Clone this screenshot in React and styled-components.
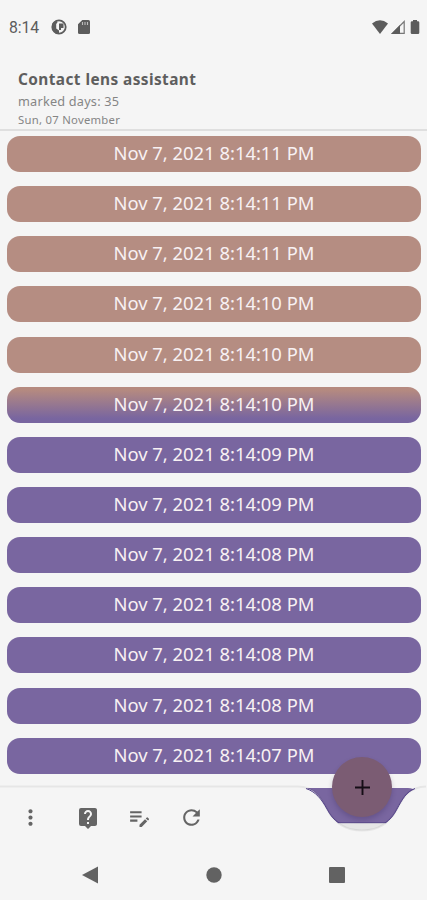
import React from 'react';
import styled, { createGlobalStyle } from 'styled-components';
import { MdMoreVert, MdLiveHelp, MdEditNote, MdRefresh } from 'react-icons/md';

const GlobalStyle = createGlobalStyle`
  * {
    box-sizing: border-box;
  }

  body {
    margin: 0;
    background: #f5f5f5;
    font-family: 'Noto Sans', 'Open Sans', sans-serif;
  }
`;

const Screen = styled.div`
  display: flex;
  flex-direction: column;
  width: 427px;
  height: 900px;
  overflow: hidden;
  background: #f5f5f5;
`;

const StatusBar = styled.div`
  display: flex;
  align-items: center;
  height: 54px;
  padding: 0 5px 0 9px;
  color: #5c5c5c;
  font-family: Roboto, sans-serif;
  font-size: 15.8px;
  letter-spacing: -0.1px;

  svg {
    display: block;
  }
`;

const StatusGroup = styled.div`
  display: flex;
  align-items: center;
  gap: ${({ $gap }) => $gap}px;
  margin-left: ${({ $push }) => ($push ? 'auto' : '12px')};
`;

const Header = styled.header`
  height: 77px;
  padding: 15px 18px 0;
  border-bottom: 2px solid #dfdfdf;
`;

const Title = styled.h1`
  margin: 0;
  color: #5e5e5e;
  font-size: 15.4px;
  font-weight: 700;
  line-height: 21px;
  letter-spacing: 0.42px;
`;

const Subtitle = styled.div`
  color: #858585;
  font-size: ${({ $size }) => $size}px;
  line-height: ${({ $line }) => $line}px;
  letter-spacing: ${({ $spacing }) => $spacing}px;
`;

const List = styled.main`
  display: flex;
  flex: none;
  flex-direction: column;
  gap: 14.15px;
  height: 656px;
  padding: 5px 6px 0 7px;
`;

const fills = {
  clay: '#b58d82',
  mixed: 'linear-gradient(#b58a80 8%, #7865a0 88%)',
  violet: '#7966a0',
};

const Row = styled.div`
  flex: none;
  height: 36px;
  border-radius: 13px;
  background: ${({ $fill }) => fills[$fill]};
  color: #f8f1f3;
  font-size: 18.4px;
  line-height: 33.5px;
  text-align: center;
`;

const BottomBar = styled.div`
  position: relative;
  flex: none;
  height: 62px;
`;

const BarShape = styled.svg`
  position: absolute;
  top: -3px;
  left: 0;
`;

const Actions = styled.div`
  position: relative;
  display: flex;
  align-items: center;
  height: 61px;
  padding-left: 19px;
`;

const IconButton = styled.button`
  display: flex;
  align-items: center;
  justify-content: center;
  width: ${({ $width }) => $width}px;
  height: 40px;
  padding: 0;
  border: 0;
  background: none;
  color: #656565;

  svg {
    flex: none;
  }
`;

const Fab = styled.button`
  position: absolute;
  top: -30px;
  left: 332px;
  display: flex;
  align-items: center;
  justify-content: center;
  width: 60px;
  height: 60px;
  padding: 0;
  border: 0;
  border-radius: 50%;
  background: #7b5c73;
  box-shadow: 0 3px 5px rgba(40, 25, 70, 0.22);
`;

const NavBar = styled.nav`
  display: flex;
  flex: 1;
  align-items: center;
  justify-content: space-between;
  padding: 0 82px 0 82px;
`;

const entries = [
  { time: '8:14:11', fill: 'clay' },
  { time: '8:14:11', fill: 'clay' },
  { time: '8:14:11', fill: 'clay' },
  { time: '8:14:10', fill: 'clay' },
  { time: '8:14:10', fill: 'clay' },
  { time: '8:14:10', fill: 'mixed' },
  { time: '8:14:09', fill: 'violet' },
  { time: '8:14:09', fill: 'violet' },
  { time: '8:14:08', fill: 'violet' },
  { time: '8:14:08', fill: 'violet' },
  { time: '8:14:08', fill: 'violet' },
  { time: '8:14:08', fill: 'violet' },
  { time: '8:14:07', fill: 'violet' },
];

function Status() {
  return (
    <StatusBar>
      <span>8:14</span>
      <StatusGroup $gap={11}>
        <svg width="16" height="16" viewBox="0 0 16 16">
          <circle cx="8" cy="8" r="6.7" fill="none" stroke="#5c5c5c" strokeWidth="1.8" />
          <path d="M1.500 4L5 1.500L6.500 3.500L5.200 5V9.500L8 11.500V15H5L1 10Z" fill="#5c5c5c" />
          <path d="M8 4.500H12.500V9H10V11H8Z" fill="#5c5c5c" />
        </svg>
        <svg width="12" height="14" viewBox="0 0 12 14">
          <path d="M4.3 0H10.5Q12 0 12 1.5V12.5Q12 14 10.5 14H1.5Q0 14 0 12.5V4.3Z" fill="#5c5c5c" />
          <path d="M4.5 2V5M7 2V5M9.5 2V5" stroke="#bcbcbc" strokeWidth="1.1" />
        </svg>
      </StatusGroup>
      <StatusGroup $gap={3} $push>
        <svg width="16" height="14" viewBox="0 0 17 14" preserveAspectRatio="none">
          <path d="M0 3.5Q8.5 -3 17 3.5L8.5 14Z" fill="#5c5c5c" />
        </svg>
        <svg width="14" height="14" viewBox="0 0 14 14">
          <path d="M1.5 13.3H13.2V1.5Z" fill="none" stroke="#777" strokeWidth="1.2" />
          <path d="M0 14L9 5V14Z" fill="#5c5c5c" />
        </svg>
        <svg width="14" height="14" viewBox="0 0 14 14">
          <path d="M5 0H9V1.3H10Q11.3 1.3 11.3 2.6V12.7Q11.3 14 10 14H4Q2.7 14 2.7 12.7V2.6Q2.7 1.3 4 1.3H5Z" fill="#5c5c5c" />
        </svg>
      </StatusGroup>
    </StatusBar>
  );
}

function App() {
  return (
    <>
      <GlobalStyle />
      <Screen>
        <Status />
        <Header>
          <Title>Contact lens assistant</Title>
          <Subtitle $size={12.7} $line={22} $spacing={0.22}>marked days: 35</Subtitle>
          <Subtitle $size={11.3} $line={15} $spacing={0.27}>Sun, 07 November</Subtitle>
        </Header>
        <List>
          {entries.map((entry, index) => (
            <Row key={index} $fill={entry.fill}>Nov 7, 2021 {entry.time} PM</Row>
          ))}
          <Row $fill="violet" />
        </List>
        <BottomBar>
          {/* bar surface with the cradle cut out around the floating button */}
          <BarShape width="427" height="65" viewBox="0 0 427 65">
            <path d="M310 39H414V50H310Z" fill="#e6e6e6" />
            <path d="M330 38.700H396" stroke="#5c4c8c" strokeWidth="1" />
            <path
              d="M0 3H298C315 3 321 14 327 25C334 39 346 46.500 362 46.500C378 46.500 390 39 397 25C403 14 409 3 426 3H427V65H0Z"
              fill="#f5f5f5"
            />
            <path
              d="M0 2.500H298C315 3 321 14 327 25C334 39 346 46.500 362 46.500C378 46.500 390 39 397 25C403 14 409 3 426 2.500"
              fill="none"
              stroke="#000"
              strokeOpacity="0.06"
              strokeWidth="2"
            />
            <path
              d="M306 4.500C316 8 321.500 15 327 25C330 31 334 36 339 39M385 39C390 36 394 31 397 25C402.500 15 406 8 415 4.500"
              fill="none"
              stroke="#54438a"
              strokeWidth="1"
            />
          </BarShape>
          <Actions>
            <IconButton $width={23} aria-label="More"><MdMoreVert size={25} /></IconButton>
            <IconButton $width={91} aria-label="Help"><MdLiveHelp size={24} /></IconButton>
            <IconButton $width={13} aria-label="Edit"><MdEditNote size={25} /></IconButton>
            <IconButton $width={91} aria-label="Refresh"><MdRefresh size={25} /></IconButton>
          </Actions>
          <Fab aria-label="Add">
            <svg width="15" height="15" viewBox="0 0 15 15">
              <path d="M7.500 0V15M0 7.500H15" stroke="#150d16" strokeWidth="1.900" />
            </svg>
          </Fab>
        </BottomBar>
        <NavBar>
          <svg width="16" height="18" viewBox="0 0 16 18">
            <path d="M0 9L16 0.500V17.500Z" fill="#626262" />
          </svg>
          <svg width="16" height="16" viewBox="0 0 16 16">
            <circle cx="8" cy="8" r="7.700" fill="#626262" />
          </svg>
          <svg width="16" height="16" viewBox="0 0 16 16">
            <rect width="16" height="16" rx="1" fill="#626262" />
          </svg>
        </NavBar>
      </Screen>
    </>
  );
}

export default App;
